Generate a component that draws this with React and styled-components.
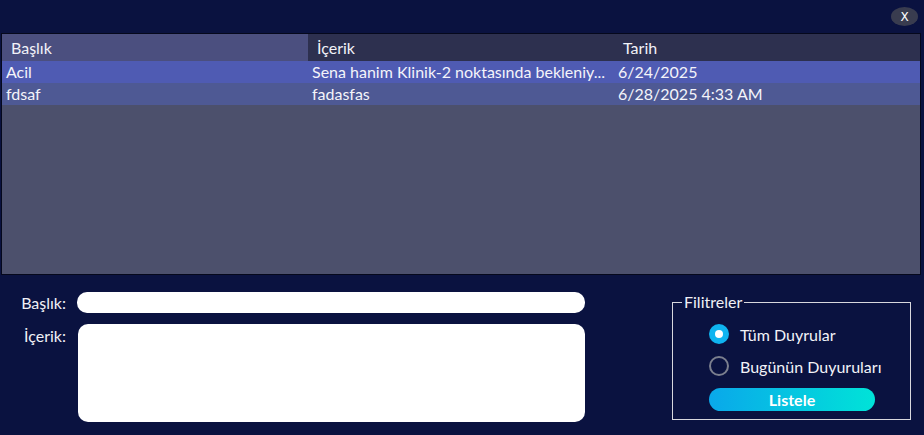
import React, { useState } from "react";
import styled, { createGlobalStyle } from "styled-components";

const Global = createGlobalStyle`
  html, body { margin: 0; padding: 0; background: #0a1240; }
  body { font-family: Lato, "Open Sans", sans-serif; color: #fff; }
  * { box-sizing: border-box; }
`;

const Page = styled.div`
  width: 924px;
  height: 435px;
  background: #0a1240;
  display: flex;
  flex-direction: column;
  overflow: hidden;
`;

const TopBar = styled.div`
  height: 33px;
  display: flex;
  justify-content: flex-end;
  align-items: flex-start;
  padding: 7px 6px 0 0;
`;

const CloseButton = styled.button`
  width: 27px;
  height: 19px;
  border: none;
  border-radius: 50%;
  background: #393c4f;
  color: #fff;
  font-family: "DejaVu Sans", sans-serif;
  font-size: 12px;
  padding: 0;
  display: flex;
  align-items: center;
  justify-content: center;
  cursor: pointer;
`;

const Table = styled.div`
  margin-left: 1px;
  width: 920px;
  height: 242px;
  flex: none;
  border: 1px solid #05081c;
  background: #4c506c;
  display: flex;
  flex-direction: column;
`;

const Grid = styled.div`
  display: grid;
  grid-template-columns: 306px 306px 306px;
`;

const HeaderCell = styled.div`
  height: 27px;
  padding: 4px 0 0 9px;
  font-size: 16px;
  color: #f2f2f8;
  background: ${(p) => (p.$active ? "#4b4f7f" : "#2d304f")};
  white-space: nowrap;
`;

const Cell = styled.div`
  height: 22px;
  padding: 1px 4px 0 4px;
  font-size: 16px;
  color: #f4f4fa;
  white-space: nowrap;
  overflow: hidden;
  background: ${(p) => (p.$selected ? "#4f5bb3" : "#4e5994")};
`;

const Bottom = styled.div`
  flex: 1;
  display: flex;
  justify-content: space-between;
  padding: 17px 13px 0 0;
`;

const Form = styled.div`
  display: flex;
  flex-direction: column;
  gap: 11px;
`;

const FormRow = styled.div`
  display: flex;
  align-items: flex-start;
  gap: 11px;
`;

const Label = styled.label`
  width: 66px;
  flex: none;
  font-size: 16px;
  color: #f0f0f6;
  text-align: right;
  line-height: 21px;
  padding-top: ${(p) => (p.$top ? "1px" : "0")};
`;

const TextInput = styled.input`
  display: block;
  margin: 0;
  width: 508px;
  height: 21px;
  border: none;
  border-radius: 10px;
  background: #fff;
  outline: none;
  padding: 0 10px;
  font-family: Lato, sans-serif;
`;

const TextArea = styled.textarea`
  display: block;
  margin: 0 0 0 1px;
  width: 507px;
  height: 98px;
  border: none;
  border-radius: 10px;
  background: #fff;
  outline: none;
  resize: none;
  padding: 6px 10px;
  font-family: Lato, sans-serif;
`;

const Fieldset = styled.fieldset`
  margin: 2px 0 0 0;
  width: 239px;
  height: 126px;
  border: 1px solid #d8d8de;
  padding: 0 0 0 36px;
  display: flex;
  flex-direction: column;
`;

const Legend = styled.legend`
  font-size: 16px;
  color: #f0f0f6;
  padding: 0 2px;
  margin-left: -27px;
  line-height: 16px;
`;

const RadioRow = styled.label`
  display: flex;
  align-items: center;
  gap: 11px;
  height: 20px;
  margin-top: ${(p) => p.$mt}px;
  font-size: 16px;
  color: #f2f2f8;
  cursor: pointer;
`;

const RadioCircle = styled.span`
  width: 20px;
  height: 20px;
  border-radius: 50%;
  flex: none;
  display: flex;
  align-items: center;
  justify-content: center;
  border: ${(p) => (p.$checked ? "none" : "2px solid #7b7f8e")};
  background: ${(p) => (p.$checked ? "#0fb4f0" : "transparent")};
  &::after {
    content: "";
    display: ${(p) => (p.$checked ? "block" : "none")};
    width: 8px;
    height: 8px;
    border-radius: 50%;
    background: #fff;
  }
`;

const ListButton = styled.button`
  margin-top: 12px;
  width: 166px;
  height: 23px;
  border: none;
  border-radius: 12px;
  background: linear-gradient(90deg, #0aa8ea 0%, #00e3d8 100%);
  color: #fff;
  font-family: Lato, sans-serif;
  font-weight: 700;
  font-size: 16px;
  padding: 0;
  cursor: pointer;
`;

const columns = ["Başlık", "İçerik", "Tarih"];
const rows = [
  ["Acil", "Sena hanim Klinik-2 noktasında bekleniy...", "6/24/2025"],
  ["fdsaf", "fadasfas", "6/28/2025 4:33 AM"],
];

export default function App() {
  const [filter, setFilter] = useState("all");
  return (
    <Page>
      <Global />
      <TopBar>
        <CloseButton>X</CloseButton>
      </TopBar>
      <Table>
        <Grid>
          {columns.map((c, i) => (
            <HeaderCell key={c} $active={i === 0}>{c}</HeaderCell>
          ))}
          {rows.map((r, ri) =>
            r.map((v, ci) => (
              <Cell key={ri + "-" + ci} $selected={ri === 0}>{v}</Cell>
            ))
          )}
        </Grid>
      </Table>
      <Bottom>
        <Form>
          <FormRow>
            <Label>Başlık:</Label>
            <TextInput />
          </FormRow>
          <FormRow>
            <Label $top>İçerik:</Label>
            <TextArea />
          </FormRow>
        </Form>
        <Fieldset>
          <Legend>Filitreler</Legend>
          <RadioRow $mt={14} onClick={() => setFilter("all")}>
            <RadioCircle $checked={filter === "all"} />
            Tüm Duyrular
          </RadioRow>
          <RadioRow $mt={12} onClick={() => setFilter("today")}>
            <RadioCircle $checked={filter === "today"} />
            Bugünün Duyuruları
          </RadioRow>
          <ListButton>Listele</ListButton>
        </Fieldset>
      </Bottom>
    </Page>
  );
}
